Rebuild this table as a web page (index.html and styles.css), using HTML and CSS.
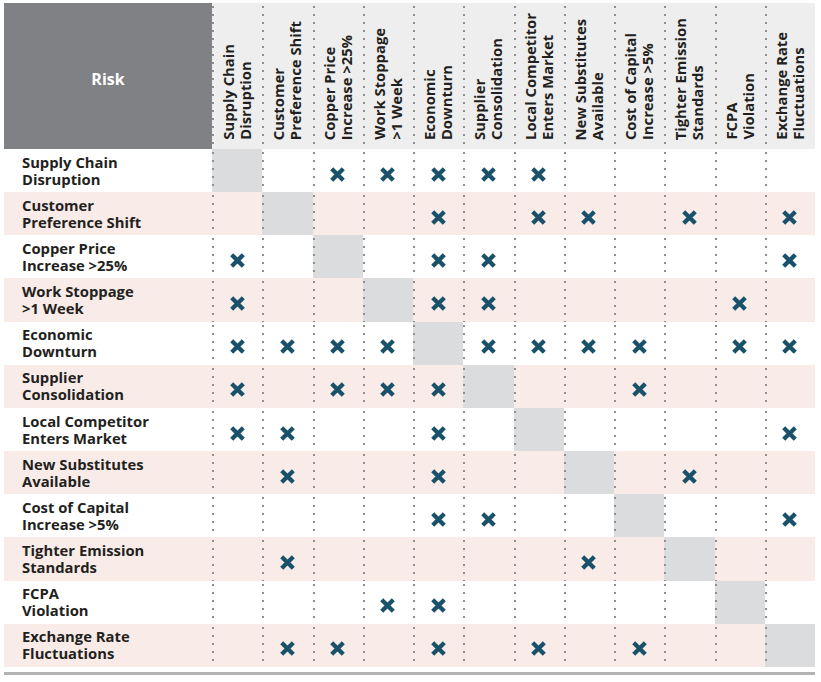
FILE: index.html
```html
<!DOCTYPE html>
<html lang="en">
<head>
<meta charset="utf-8">
<title>Risk Matrix</title>
<link rel="stylesheet" href="styles.css">
</head>
<body>
<svg width="0" height="0" class="defs">
  <defs>
    <symbol id="x" viewBox="0 0 14 14">
      <path d="M1.6 1.6 L12.4 12.4 M12.4 1.6 L1.6 12.4" stroke="currentColor" stroke-width="4" fill="none"/>
    </symbol>
  </defs>
</svg>
<div class="matrix">
  <div class="row head">
    <div class="risk">Risk</div>
    <div class="hc"><span>Supply Chain<br>Disruption</span></div>
    <div class="hc"><span>Customer<br>Preference Shift</span></div>
    <div class="hc"><span>Copper Price<br>Increase &gt;25%</span></div>
    <div class="hc"><span>Work Stoppage<br>&gt;1 Week</span></div>
    <div class="hc"><span>Economic<br>Downturn</span></div>
    <div class="hc"><span>Supplier<br>Consolidation</span></div>
    <div class="hc"><span>Local Competitor<br>Enters Market</span></div>
    <div class="hc"><span>New Substitutes<br>Available</span></div>
    <div class="hc"><span>Cost of Capital<br>Increase &gt;5%</span></div>
    <div class="hc"><span>Tighter Emission<br>Standards</span></div>
    <div class="hc"><span>FCPA<br>Violation</span></div>
    <div class="hc"><span>Exchange Rate<br>Fluctuations</span></div>
  </div>

  <div class="row">
    <div class="lbl">Supply Chain<br>Disruption</div>
    <div class="c d"></div>
    <div class="c"></div>
    <div class="c"><svg class="x"><use href="#x"/></svg></div>
    <div class="c"><svg class="x"><use href="#x"/></svg></div>
    <div class="c"><svg class="x"><use href="#x"/></svg></div>
    <div class="c"><svg class="x"><use href="#x"/></svg></div>
    <div class="c"><svg class="x"><use href="#x"/></svg></div>
    <div class="c"></div>
    <div class="c"></div>
    <div class="c"></div>
    <div class="c"></div>
    <div class="c"></div>
  </div>

  <div class="row alt">
    <div class="lbl">Customer<br>Preference Shift</div>
    <div class="c"></div>
    <div class="c d"></div>
    <div class="c"></div>
    <div class="c"></div>
    <div class="c"><svg class="x"><use href="#x"/></svg></div>
    <div class="c"></div>
    <div class="c"><svg class="x"><use href="#x"/></svg></div>
    <div class="c"><svg class="x"><use href="#x"/></svg></div>
    <div class="c"></div>
    <div class="c"><svg class="x"><use href="#x"/></svg></div>
    <div class="c"></div>
    <div class="c"><svg class="x"><use href="#x"/></svg></div>
  </div>

  <div class="row">
    <div class="lbl">Copper Price<br>Increase &gt;25%</div>
    <div class="c"><svg class="x"><use href="#x"/></svg></div>
    <div class="c"></div>
    <div class="c d"></div>
    <div class="c"></div>
    <div class="c"><svg class="x"><use href="#x"/></svg></div>
    <div class="c"><svg class="x"><use href="#x"/></svg></div>
    <div class="c"></div>
    <div class="c"></div>
    <div class="c"></div>
    <div class="c"></div>
    <div class="c"></div>
    <div class="c"><svg class="x"><use href="#x"/></svg></div>
  </div>

  <div class="row alt">
    <div class="lbl">Work Stoppage<br>&gt;1 Week</div>
    <div class="c"><svg class="x"><use href="#x"/></svg></div>
    <div class="c"></div>
    <div class="c"></div>
    <div class="c d"></div>
    <div class="c"><svg class="x"><use href="#x"/></svg></div>
    <div class="c"><svg class="x"><use href="#x"/></svg></div>
    <div class="c"></div>
    <div class="c"></div>
    <div class="c"></div>
    <div class="c"></div>
    <div class="c"><svg class="x"><use href="#x"/></svg></div>
    <div class="c"></div>
  </div>

  <div class="row">
    <div class="lbl">Economic<br>Downturn</div>
    <div class="c"><svg class="x"><use href="#x"/></svg></div>
    <div class="c"><svg class="x"><use href="#x"/></svg></div>
    <div class="c"><svg class="x"><use href="#x"/></svg></div>
    <div class="c"><svg class="x"><use href="#x"/></svg></div>
    <div class="c d"></div>
    <div class="c"><svg class="x"><use href="#x"/></svg></div>
    <div class="c"><svg class="x"><use href="#x"/></svg></div>
    <div class="c"><svg class="x"><use href="#x"/></svg></div>
    <div class="c"><svg class="x"><use href="#x"/></svg></div>
    <div class="c"></div>
    <div class="c"><svg class="x"><use href="#x"/></svg></div>
    <div class="c"><svg class="x"><use href="#x"/></svg></div>
  </div>

  <div class="row alt">
    <div class="lbl">Supplier<br>Consolidation</div>
    <div class="c"><svg class="x"><use href="#x"/></svg></div>
    <div class="c"></div>
    <div class="c"><svg class="x"><use href="#x"/></svg></div>
    <div class="c"><svg class="x"><use href="#x"/></svg></div>
    <div class="c"><svg class="x"><use href="#x"/></svg></div>
    <div class="c d"></div>
    <div class="c"></div>
    <div class="c"></div>
    <div class="c"><svg class="x"><use href="#x"/></svg></div>
    <div class="c"></div>
    <div class="c"></div>
    <div class="c"></div>
  </div>

  <div class="row">
    <div class="lbl">Local Competitor<br>Enters Market</div>
    <div class="c"><svg class="x"><use href="#x"/></svg></div>
    <div class="c"><svg class="x"><use href="#x"/></svg></div>
    <div class="c"></div>
    <div class="c"></div>
    <div class="c"><svg class="x"><use href="#x"/></svg></div>
    <div class="c"></div>
    <div class="c d"></div>
    <div class="c"></div>
    <div class="c"></div>
    <div class="c"></div>
    <div class="c"></div>
    <div class="c"><svg class="x"><use href="#x"/></svg></div>
  </div>

  <div class="row alt">
    <div class="lbl">New Substitutes<br>Available</div>
    <div class="c"></div>
    <div class="c"><svg class="x"><use href="#x"/></svg></div>
    <div class="c"></div>
    <div class="c"></div>
    <div class="c"><svg class="x"><use href="#x"/></svg></div>
    <div class="c"></div>
    <div class="c"></div>
    <div class="c d"></div>
    <div class="c"></div>
    <div class="c"><svg class="x"><use href="#x"/></svg></div>
    <div class="c"></div>
    <div class="c"></div>
  </div>

  <div class="row">
    <div class="lbl">Cost of Capital<br>Increase &gt;5%</div>
    <div class="c"></div>
    <div class="c"></div>
    <div class="c"></div>
    <div class="c"></div>
    <div class="c"><svg class="x"><use href="#x"/></svg></div>
    <div class="c"><svg class="x"><use href="#x"/></svg></div>
    <div class="c"></div>
    <div class="c"></div>
    <div class="c d"></div>
    <div class="c"></div>
    <div class="c"></div>
    <div class="c"><svg class="x"><use href="#x"/></svg></div>
  </div>

  <div class="row alt">
    <div class="lbl">Tighter Emission<br>Standards</div>
    <div class="c"></div>
    <div class="c"><svg class="x"><use href="#x"/></svg></div>
    <div class="c"></div>
    <div class="c"></div>
    <div class="c"></div>
    <div class="c"></div>
    <div class="c"></div>
    <div class="c"><svg class="x"><use href="#x"/></svg></div>
    <div class="c"></div>
    <div class="c d"></div>
    <div class="c"></div>
    <div class="c"></div>
  </div>

  <div class="row">
    <div class="lbl">FCPA<br>Violation</div>
    <div class="c"></div>
    <div class="c"></div>
    <div class="c"></div>
    <div class="c"><svg class="x"><use href="#x"/></svg></div>
    <div class="c"><svg class="x"><use href="#x"/></svg></div>
    <div class="c"></div>
    <div class="c"></div>
    <div class="c"></div>
    <div class="c"></div>
    <div class="c"></div>
    <div class="c d"></div>
    <div class="c"></div>
  </div>

  <div class="row alt">
    <div class="lbl">Exchange Rate<br>Fluctuations</div>
    <div class="c"></div>
    <div class="c"><svg class="x"><use href="#x"/></svg></div>
    <div class="c"><svg class="x"><use href="#x"/></svg></div>
    <div class="c"></div>
    <div class="c"><svg class="x"><use href="#x"/></svg></div>
    <div class="c"></div>
    <div class="c"><svg class="x"><use href="#x"/></svg></div>
    <div class="c"></div>
    <div class="c"><svg class="x"><use href="#x"/></svg></div>
    <div class="c"></div>
    <div class="c"></div>
    <div class="c d"></div>
  </div>
</div>
<div class="rule"></div>
</body>
</html>
```

FILE: styles.css
```css
html, body {
  margin: 0;
  padding: 0;
  background: #ffffff;
}

body {
  padding: 3px 6px 0 4px;
  font-family: "Open Sans", "Liberation Sans", sans-serif;
  font-weight: 700;
  color: #231f20;
}

.defs {
  position: absolute;
  width: 0;
  height: 0;
}

.matrix {
  width: 811px;
}

.row {
  display: grid;
  grid-template-columns: 208px repeat(12, 1fr);
  height: 43.17px;
}

.row.alt {
  background: #f9ece8;
}

.row.head {
  height: 146px;
  background: #eeeeee;
}

.risk {
  background: #808184;
  color: #ffffff;
  font-size: 16px;
  display: flex;
  align-items: center;
  justify-content: center;
  padding-top: 6px;
}

.hc,
.c {
  background-image: linear-gradient(to bottom, #8f8f8f 0, #8f8f8f 1.6px, transparent 1.6px);
  background-size: 1.6px 8px;
  background-repeat: repeat-y;
  background-position: 0 3px;
}

.hc {
  display: flex;
  align-items: flex-end;
  justify-content: center;
  padding-bottom: 9px;
}

.hc span {
  writing-mode: vertical-rl;
  transform: rotate(180deg);
  font-size: 14.8px;
  line-height: 17px;
  white-space: nowrap;
}

.lbl {
  font-size: 14.8px;
  line-height: 17px;
  padding-left: 18px;
  display: flex;
  align-items: center;
}

.c {
  display: flex;
  align-items: center;
  justify-content: center;
  padding-top: 7px;
}

.c.d {
  background-color: #dbdcde;
}

.x {
  width: 15px;
  height: 15px;
  color: #19516a;
}

.rule {
  width: 811px;
  height: 3px;
  margin-top: 5px;
  background: #b3b3b3;
}
```
